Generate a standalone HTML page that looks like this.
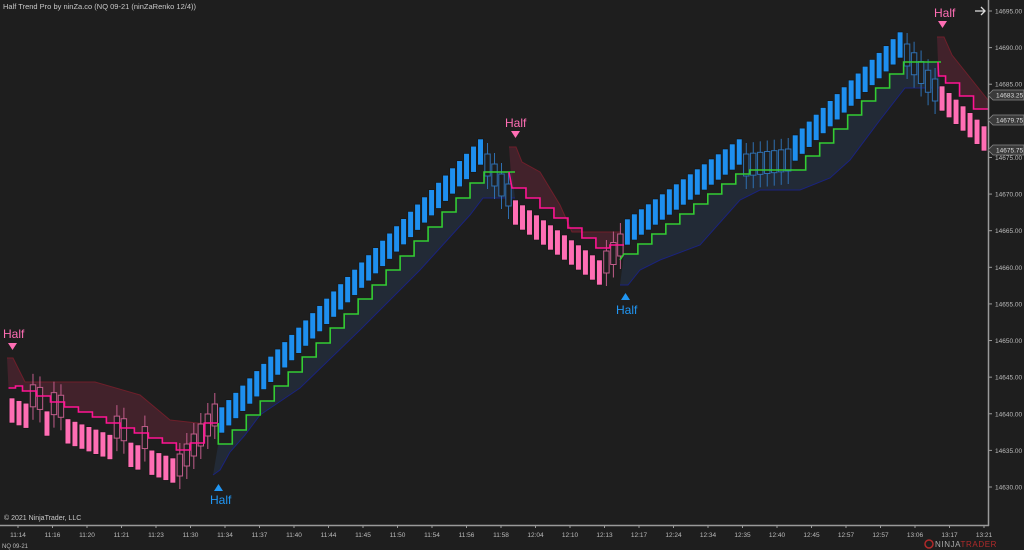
<!DOCTYPE html>
<html><head><meta charset="utf-8"><style>
html,body{margin:0;padding:0;background:#1e1e1e;width:1024px;height:550px;overflow:hidden;font-family:"Liberation Sans",sans-serif}
svg{position:absolute;left:0;top:0}
</style></head><body>
<svg id="c" width="1024" height="550" xmlns="http://www.w3.org/2000/svg">
<rect width="1024" height="550" fill="#1e1e1e"/>
<g id="bands"></g><g id="bars"></g><g id="lines"></g>
<text x="3" y="9" fill="#c8c8c8" font-size="7.5" font-family="Liberation Sans, sans-serif">Half Trend Pro by ninZa.co (NQ 09-21 (ninZaRenko 12/4))</text>
<text x="4" y="520" fill="#c8c8c8" font-size="7" font-family="Liberation Sans, sans-serif">© 2021 NinjaTrader, LLC</text>
<text x="2" y="548" fill="#bbb" font-size="6" font-family="Liberation Sans, sans-serif">NQ 09-21</text>
<g font-family="Liberation Sans, sans-serif" font-size="12">
<text x="3" y="338" fill="#ff6eb4">Half</text><path d="M8 343h9l-4.5 7z" fill="#ff6eb4"/>
<text x="505" y="127" fill="#ff6eb4">Half</text><path d="M511 131h9l-4.5 7z" fill="#ff6eb4"/>
<text x="934" y="17" fill="#ff6eb4">Half</text><path d="M938 21h9l-4.5 7z" fill="#ff6eb4"/>
<text x="210" y="504" fill="#2196f3">Half</text><path d="M214 491h9l-4.5-7z" fill="#2196f3"/>
<text x="616" y="314" fill="#2196f3">Half</text><path d="M621 300h9l-4.5-7z" fill="#2196f3"/>
</g>
<path d="M975 11h10M981 7l4 4-4 4" stroke="#ddd" stroke-width="1.3" fill="none"/>
<line x1="988.5" y1="0" x2="988.5" y2="526" stroke="#9a9a9a" stroke-width="1.5"/>
<line x1="0" y1="525.5" x2="989" y2="525.5" stroke="#9a9a9a" stroke-width="1.5"/>
<g id="axis" font-family="Liberation Sans, sans-serif" font-size="6.5" fill="#bbb"></g>
<text x="935" y="547" font-family="Liberation Sans, sans-serif" font-size="8" letter-spacing="0.6"><tspan fill="#aaa">NINJA</tspan><tspan fill="#b02a2a">TRADER</tspan></text>
<circle cx="929" cy="544" r="4" fill="none" stroke="#b02a2a" stroke-width="1.5"/>
</svg>
<script>
var NS="http://www.w3.org/2000/svg";
function el(p,t,a){var e=document.createElementNS(NS,t);for(var k in a)e.setAttribute(k,a[k]);p.appendChild(e);return e;}
var P=6.993;function X(i){return 12+i*P;}
var segs=[[0,23,410,470,'p'],[24,29,465,415,'hp'],[30,67,420,152,'b'],[68,71,165,195,'hb'],[72,84,212,272,'p'],[85,87,262,245,'hp'],[88,104,232,152,'b'],[105,111,165,160,'hb'],[112,127,148,45,'b'],[128,132,55,90,'hb'],[133,139,98,138,'p']];
var hollowPink=[3,4,6,7,15,16,19];
var bars=[];
segs.forEach(function(s){for(var i=s[0];i<=s[1];i++){var t=s[1]==s[0]?0:(i-s[0])/(s[1]-s[0]);var c=s[2]+(s[3]-s[2])*t;var ty=s[4];
if(ty=='p'&&hollowPink.indexOf(i)>=0){ty='hp';c-=22;}
bars.push({i:i,c:c,t:ty});}});
var gb=document.getElementById('bars');
bars.forEach(function(b){var x=X(b.i);
if(b.t=='p'){el(gb,'rect',{x:x-2.8,y:b.c-12,width:5.6,height:25,fill:'#ff6eb4',stroke:'#141414','stroke-width':0.6});}
else if(b.t=='b'){el(gb,'rect',{x:x-2.8,y:b.c-13,width:5.6,height:26,fill:'#1e8fef',stroke:'#141414','stroke-width':0.6});}
else{var col=b.t=='hp'?'#c05c8a':'#2e6fb0';
el(gb,'line',{x1:x,y1:b.c-22,x2:x,y2:b.c+24,stroke:col,'stroke-width':1});
el(gb,'rect',{x:x-2.7,y:b.c-11,width:5.4,height:22,fill:'#1e1e1e',stroke:col,'stroke-width':1});}
});
// lines
function stepLine(pts){var d='M'+pts[0][0]+' '+pts[0][1];for(var k=1;k<pts.length;k++){d+='H'+pts[k][0]+'V'+pts[k][1];}return d;}
var gl=document.getElementById('lines'),gbd=document.getElementById('bands');
function build(i0,i1,f){var pts=[];var last=null;for(var i=i0;i<=i1;i++){var b=bars[i];var v=f(b);if(last!==null&&i%2==1)v=last;pts.push([X(i)-3.5,Math.round(v)]);last=v;}return pts;}
var pink1=build(0,29,function(b){return Math.min(450,(b.t=='p'?b.c:b.c+22)-24);});
pink1[0][1]=388;
var green1=build(30,71,function(b){return b.t=='b'?b.c+24:172;});
var pink2=build(72,87,function(b){return Math.min(262,(b.t=='p'?b.c:b.c+15)-24);});
var green2=build(88,132,function(b){return b.t=='b'?Math.min(b.c+22,258):(b.i>127?62:170);});
var pink3=build(133,139,function(b){return b.c-22;});
function poly(edge,line,fill,str){var pts=edge.map(function(p){return p.join(',')});var d='M'+pts.join('L');var rev=line.slice().reverse();
var sl=[];for(var k=0;k<rev.length;k++){sl.push(rev[k][0]+7+','+rev[k][1]);sl.push(rev[k][0]+','+rev[k][1]);}
el(gbd,'path',{d:d+'L'+sl.join('L')+'Z',fill:fill});el(gbd,'polyline',{points:pts.join(' '),fill:'none',stroke:str,'stroke-width':1});}
var PF='rgba(110,40,60,0.45)',PS='#6e1f2a',BF='rgba(40,60,90,0.4)',BS='#1a237e';
poly([[7,358],[13,358],[25,382],[95,382],[140,395],[170,420],[215,425]],pink1,PF,PS);
poly([[213,475],[220,470],[230,452],[245,435],[260,415],[300,388],[360,330],[420,270],[470,215],[483,198],[515,198]],green1,BF,BS);
poly([[509,147],[516,147],[522,162],[540,172],[560,205],[572,232],[620,232]],pink2,PF,PS);
poly([[620,285],[628,285],[640,270],[660,260],[700,245],[740,200],[760,190],[800,190],[830,178],[850,160],[880,120],[905,88],[940,88]],green2,BF,BS);
poly([[937,37],[944,37],[952,55],[988,100]],pink3,PF,PS);
// line traces
el(gl,'path',{d:stepLine(pink1)+'H218',stroke:'#ff1493','stroke-width':1.6,fill:'none'});
el(gl,'path',{d:'M'+(X(30)-3.5)+' '+pink1[pink1.length-1][1]+stepLine(green1).replace('M','L')+'H515',stroke:'#33cc33','stroke-width':1.6,fill:'none'});
el(gl,'path',{d:'M509 172'+stepLine(pink2).replace('M','L')+'H624',stroke:'#ff1493','stroke-width':1.6,fill:'none'});
el(gl,'path',{d:'M620 260'+stepLine(green2).replace('M','L')+'H941',stroke:'#33cc33','stroke-width':1.6,fill:'none'});
el(gl,'path',{d:'M938 62'+stepLine(pink3).replace('M','L')+'H988',stroke:'#ff1493','stroke-width':1.6,fill:'none'});
// axes
var ga=document.getElementById('axis');
var pr=[14695,14690,14685,14675,14670,14665,14660,14655,14650,14645,14640,14635,14630];
pr.forEach(function(p){var y=11+(14695-p)*7.323;el(ga,'line',{x1:988,y1:y,x2:992,y2:y,stroke:'#9a9a9a'});var t=el(ga,'text',{x:995,y:y+2.5});t.textContent=p+'.00';});
[['14683.25',95],['14679.75',120],['14675.75',150]].forEach(function(f){el(ga,'path',{d:'M988 '+f[1]+'l5 -5h31v10h-31z',fill:'#3a3a3a',stroke:'#888','stroke-width':0.8});var t=el(ga,'text',{x:996,y:f[1]+2.5,fill:'#ddd'});t.textContent=f[0];});
var tl='11:14 11:16 11:20 11:21 11:23 11:30 11:34 11:37 11:40 11:44 11:45 11:50 11:54 11:56 11:58 12:04 12:10 12:13 12:17 12:24 12:34 12:35 12:40 12:45 12:57 12:57 13:06 13:17 13:21'.split(' ');
tl.forEach(function(s,k){var x=18+k*34.5;el(ga,'line',{x1:x,y1:525,x2:x,y2:528,stroke:'#9a9a9a'});var t=el(ga,'text',{x:x,y:537,'text-anchor':'middle'});t.textContent=s;});
</script>
</body></html>
